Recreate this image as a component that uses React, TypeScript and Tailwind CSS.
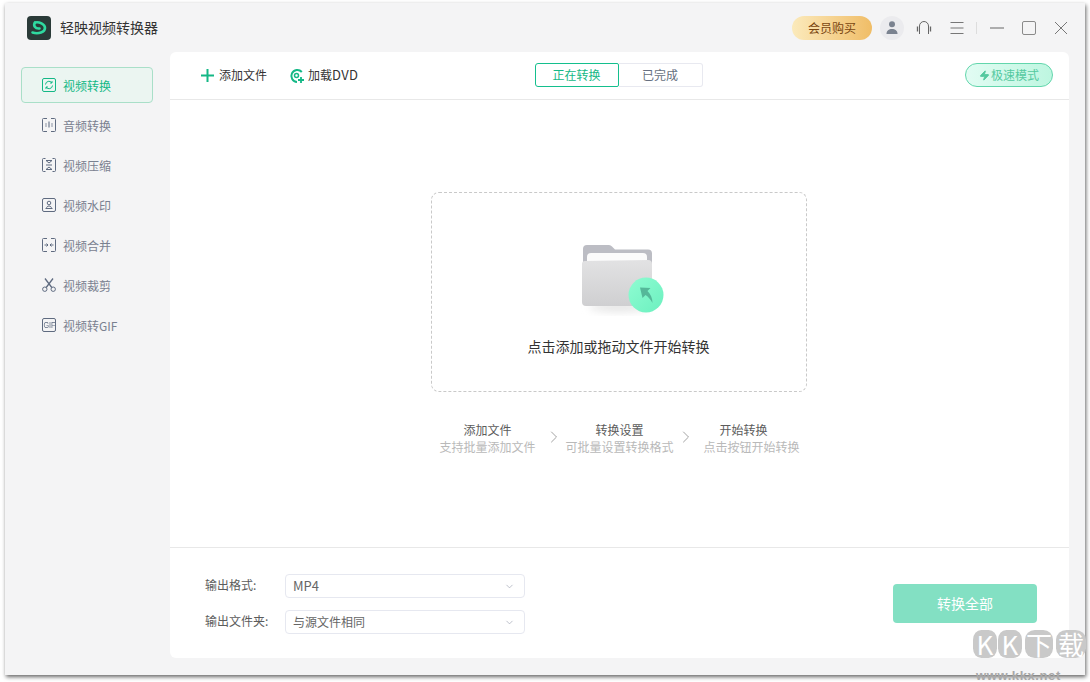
import React from "react";
import { ChevronRight, ChevronDown, Zap } from "lucide-react";

const font = { fontFamily: '"Noto Sans CJK SC", "Noto Sans", sans-serif' };

const I = ({ children, c = "#5f6b80" }: { children: React.ReactNode; c?: string }) => (
  <svg width="14" height="14" viewBox="0 0 14 14" fill="none" stroke={c} strokeWidth="1" className="shrink-0">
    {children}
  </svg>
);

const br = "M5 .5H1.500a1 1 0 0 0-1 1v11a1 1 0 0 0 1 1H5M9 .5h3.500a1 1 0 0 1 1 1v11a1 1 0 0 1-1 1H9";

const items: [string, React.ReactNode][] = [
  ["音频转换", <I><path d={br} /><path d="M4 5v4M10 5v4" stroke="#8a92a3" /><path d="M7 3.500v6" stroke="#a4abb8" strokeWidth="2" /></I>],
  ["视频压缩", <I><path d="M3.500 .5H1.500a1 1 0 0 0-1 1v11a1 1 0 0 0 1 1h2M10.500 .5h2a1 1 0 0 1 1 1v11a1 1 0 0 1-1 1h-2" /><path d="M4 2.500h6L7 5zM4 11.500h6L7 9zM4 7h6" /></I>],
  ["视频水印", <I><rect x=".5" y=".5" width="13" height="13" rx="1.500" /><circle cx="7" cy="5" r="1.800" /><path d="M3.500 10.500h7M4.500 10.500c0-1.500 1-2.500 2.500-2.500s2.500 1 2.500 2.500" /></I>],
  ["视频合并", <I><path d={br} /><path d="M2.500 7h3M4.500 5.500L6 7 4.500 8.500M11.500 7h-3M9.500 5.500L8 7l1.500 1.500" /></I>],
  ["视频裁剪", <I><circle cx="2.800" cy="11.200" r="2.200" /><circle cx="11.200" cy="11.200" r="2.200" /><path d="M4.200 9.500L11 .5M9.800 9.500L3 .5" strokeWidth="1.300" /></I>],
];

function Step({ t, s, shift }: { t: string; s: string; shift?: boolean }) {
  return (
    <div className="flex flex-col items-center w-[98px] shrink-0">
      <span className={`${shift ? "mr-4" : ""} text-[12px] leading-[17px] text-[#5c5c5c] whitespace-nowrap`}>{t}</span>
      <span className="text-[12px] leading-[17px] text-[#b9b9b9] whitespace-nowrap">{s}</span>
    </div>
  );
}

function Sel({ label, value, latin }: { label: string; value: string; latin?: boolean }) {
  return (
    <div className="flex items-center h-6">
      <span className="w-20 pb-[2px] text-[12px] text-[#5c5c5c]">{label}</span>
      <div className="w-60 h-6 rounded border border-[#e6e8f0] flex items-center justify-between pl-[7px] pr-[9px] text-[#666]">
        <span className={latin ? "text-[13px]" : "text-[12px]"}>{value}</span>
        <ChevronDown size={11} color="#a0a6b4" strokeWidth={1.500} />
      </div>
    </div>
  );
}

function Blob({ t, w }: { t: string; w: string }) {
  return <span className={`${w} h-7 rounded-[35%] bg-[#c9c9c9] text-white flex items-center justify-center`}>{t}</span>;
}

export default function App() {
  return (
    <div className="w-[1090px] h-[682px] bg-white overflow-hidden pt-[3px] pl-[5px] relative" style={font}>
      <div className="w-[1080px] h-[672px] bg-[#f4f4f5] shadow-[1px_2px_4px_rgba(0,0,0,0.6)] flex flex-col">
        <header className="h-[49px] shrink-0 flex items-center pl-[22px]">
          <svg width="24" height="24" viewBox="0 0 24 24" fill="none" className="shrink-0 mt-[1px]">
            <rect width="24" height="24" rx="4" fill="#2a3a38" />
            <path d="M8 6.500C12 5.500 18 8 18 12c0 4-6.500 6.500-12.500 4.500" stroke="#2fd9a0" strokeWidth="2.600" strokeLinecap="round" />
            <path d="M8 6.500C6 9.500 8 13 12.500 12.500" stroke="#2fd9a0" strokeWidth="2.600" strokeLinecap="round" />
          </svg>
          <span className="ml-[9px] text-[14px] text-[#333] whitespace-nowrap">轻映视频转换器</span>
          <div className="ml-[634px] flex items-center">
            <div className="w-20 h-6 rounded-full bg-gradient-to-r from-[#fbeabb] to-[#f0bd66] text-[12px] text-[#7a4610] flex items-center justify-center">会员购买</div>
            <div className="ml-2 w-6 h-6 rounded-full bg-[#ebebee] flex items-center justify-center">
              <svg width="12" height="13" viewBox="0 0 12 13" fill="#7b8390"><circle cx="6" cy="3.300" r="3" /><path d="M.5 13c0-3.500 2.300-5 5.500-5s5.500 1.500 5.500 5z" /></svg>
            </div>
            <svg width="16" height="16" viewBox="0 0 16 16" fill="none" stroke="#666" className="ml-3">
              <path d="M3.500 14V6a4.500 4.500 0 0 1 9 0v8" />
              <path d="M1.500 6.500v5M14.500 6.500v5" strokeWidth="1.300" />
            </svg>
            <svg width="14" height="14" viewBox="0 0 14 14" stroke="#777" className="ml-[18px]">
              <path d="M.5 1.500h13M.5 7h13M.5 12.500h13" />
            </svg>
            <div className="ml-[12px] w-px h-3 bg-[#ddd]" />
            <svg width="14" height="14" viewBox="0 0 14 14" stroke="#666" className="ml-[13px]"><path d="M0 7h14" /></svg>
            <div className="ml-[18px] w-[14px] h-[14px] rounded-[2px] border-[1.500px] border-[#8a8a8a]" />
            <svg width="14" height="14" viewBox="0 0 14 14" stroke="#777" className="ml-[18px]"><path d="M1 1l12 12M13 1L1 13" /></svg>
          </div>
        </header>
        <div className="flex flex-1 min-h-0 pr-4 pb-[17px]">
          <nav className="w-[165px] shrink-0 pl-4 pr-[17px] pt-[15px] flex flex-col gap-1 text-[12px] text-[#7a8190]">
            <div className="h-9 rounded border border-[#a9dfc8] bg-[#ebf5f1] flex items-center pl-[20px] gap-[7px] text-[#14b886]">
              <I c="#14b886">
                <rect x=".5" y=".5" width="13" height="13" rx="1.500" />
                <path d="M3.500 6.500A3.500 3.500 0 0 1 10 5M10.500 7.500A3.500 3.500 0 0 1 4 9M10 3v2H8M4 11V9h2" />
              </I>
              <span className="pt-[2px]">视频转换</span>
            </div>
            {items.map(([t, ic]) => (
              <div key={t} className="h-9 flex items-center pl-[21px] gap-[7px]">
                {ic}
                <span className="pt-[2px]">{t}</span>
              </div>
            ))}
            <div className="h-9 flex items-center pl-[21px] gap-[7px]">
              <div className="w-[14px] h-[14px] shrink-0 border border-[#5f6b80] rounded-[2px] flex items-center justify-center text-[#5f6b80] overflow-hidden">
                <span className="text-[9px] leading-none scale-x-[0.8] font-['Liberation_Sans',sans-serif]">GIF</span>
              </div>
              <span className="pt-[2px]">视频转GIF</span>
            </div>
          </nav>
          <main className="flex-1 min-w-0 bg-white rounded-md flex flex-col">
            <div className="h-12 shrink-0 border-b border-[#e8e8e8] flex items-center px-[31px]">
              <div className="flex-1 flex items-center">
                <svg width="13" height="13" viewBox="0 0 13 13" stroke="#14b886" strokeWidth="2"><path d="M6.500 0v13M0 6.500h13" /></svg>
                <span className="ml-[5px] pb-[2px] text-[12px] text-[#333] whitespace-nowrap">添加文件</span>
                <svg width="16" height="16" viewBox="0 0 16 16" fill="none" className="ml-[22px]">
                  <path d="M12.800 4A6 6 0 1 0 8 14" stroke="#14b886" strokeWidth="2" />
                  <circle cx="7.500" cy="7.500" r="2" stroke="#14b886" strokeWidth="1.500" />
                  <path d="M12 9v6M9 12h6" stroke="#14b886" strokeWidth="1.800" />
                </svg>
                <span className="ml-[3px] pb-[2px] text-[12px] text-[#333] whitespace-nowrap">加载<span className="text-[13px] tracking-[0.3px]">DVD</span></span>
              </div>
              <div className="flex text-[12px] -mt-[1px] -translate-x-px">
                <div className="w-[84px] h-6 rounded-l-[3px] rounded-r-[2px] border border-[#14bf8d] text-[#14b886] flex items-center justify-center">正在转换</div>
                <div className="w-[84px] h-6 rounded-r-[3px] border border-l-0 border-[#e8e9f0] text-[#666f80] flex items-center justify-center">已完成</div>
              </div>
              <div className="flex-1 flex justify-end -mt-[1px]">
                <div className="w-[88px] h-6 -mr-[15px] rounded-full border border-[#62d6ac] bg-gradient-to-r from-[#e2fcf3] to-[#bdf6e0] text-[12px] text-[#54c9a0] flex items-center justify-center gap-[1px]">
                  <Zap size={11} fill="#54c9a0" color="#54c9a0" />
                  <span>极速模式</span>
                </div>
              </div>
            </div>
            <div className="flex-1 flex flex-col items-center pt-[92px]">
              <div className="w-[376px] h-[200px] mr-[2px] shrink-0 rounded-lg border border-dashed border-[#c9c9c9] flex flex-col items-center pt-[51px]">
                <svg width="84" height="72" viewBox="0 0 84 72" className="shrink-0 ml-[9px]">
                  <defs>
                    <linearGradient id="f1" x1="0" y1="0" x2="0" y2="1"><stop offset="0" stopColor="#e2e2e3" /><stop offset="1" stopColor="#cfcfd1" /></linearGradient>
                    <linearGradient id="f2" x1="0" y1="0" x2="1" y2="1"><stop offset="0" stopColor="#8ffcd2" /><stop offset="1" stopColor="#6cf0bf" /></linearGradient>
                    <filter id="b" x="-30%" y="-60%" width="160%" height="220%"><feGaussianBlur stdDeviation="4" /></filter>
                  </defs>
                  <ellipse cx="38" cy="63" rx="30" ry="4" fill="#e0e0e0" filter="url(#b)" />
                  <path d="M2 5a4 4 0 0 1 4-4h22a4 4 0 0 1 3 1.500l3 3h33a4 4 0 0 1 4 4v16H2z" fill="#bcbdc4" />
                  <path d="M6 13a4 4 0 0 1 4-4h52a4 4 0 0 1 4 4v14H6z" fill="#fbfbfb" />
                  <path d="M1 20a3 3 0 0 1 3-3l63-1a4 4 0 0 1 4 4v38a4 4 0 0 1-4 4H5a4 4 0 0 1-4-4z" fill="url(#f1)" />
                  <circle cx="65" cy="51" r="17.500" fill="url(#f2)" />
                  <path d="M59 43.500l10.500 .5-3 3c3 3 5 7 5 12-2-3.500-4-6-7-8l-3 3z" fill="#55b899" />
                </svg>
                <span className="mt-[20px] text-[14px] leading-[20px] text-[#333]">点击添加或拖动文件开始转换</span>
              </div>
              <div className="mt-[29px] flex items-center">
                <Step t="添加文件" s="支持批量添加文件" />
                <ChevronRight size={20} color="#999" strokeWidth={1.100} className="mx-[7px] -mt-[2px]" />
                <Step t="转换设置" s="可批量设置转换格式" />
                <ChevronRight size={20} color="#999" strokeWidth={1.100} className="mx-[7px] -mt-[2px]" />
                <Step t="开始转换" s="点击按钮开始转换" shift />
              </div>
            </div>
            <div className="h-[111px] shrink-0 border-t border-[#e8e8e8] flex items-center pl-[35px] pr-8">
              <div className="flex flex-col gap-3 pt-[2px]">
                <Sel label="输出格式:" value="MP4" latin />
                <Sel label="输出文件夹:" value="与源文件相同" />
              </div>
              <div className="ml-auto w-[144px] h-[39px] rounded bg-[#83e0c3] text-white text-[14px] flex items-center justify-center">转换全部</div>
            </div>
          </main>
        </div>
      </div>
      <div className="absolute left-[973px] top-[630px] w-[117px] pointer-events-none">
        <div className="flex items-center text-[26px] font-normal leading-none">
          <Blob t="K" w="w-[24px]" />
          <Blob t="K" w="w-[24px] ml-[1px]" />
          <Blob t="下" w="w-[28px] ml-[3px]" />
          <Blob t="载" w="w-[30px] ml-[3px]" />
        </div>
        <div className="mt-[11px] ml-[3px] text-[13px] leading-[13px] font-bold tracking-[0.6px] text-[#a8a8a8] whitespace-nowrap font-['Liberation_Sans',sans-serif]">www.kkx.net</div>
      </div>
    </div>
  );
}
